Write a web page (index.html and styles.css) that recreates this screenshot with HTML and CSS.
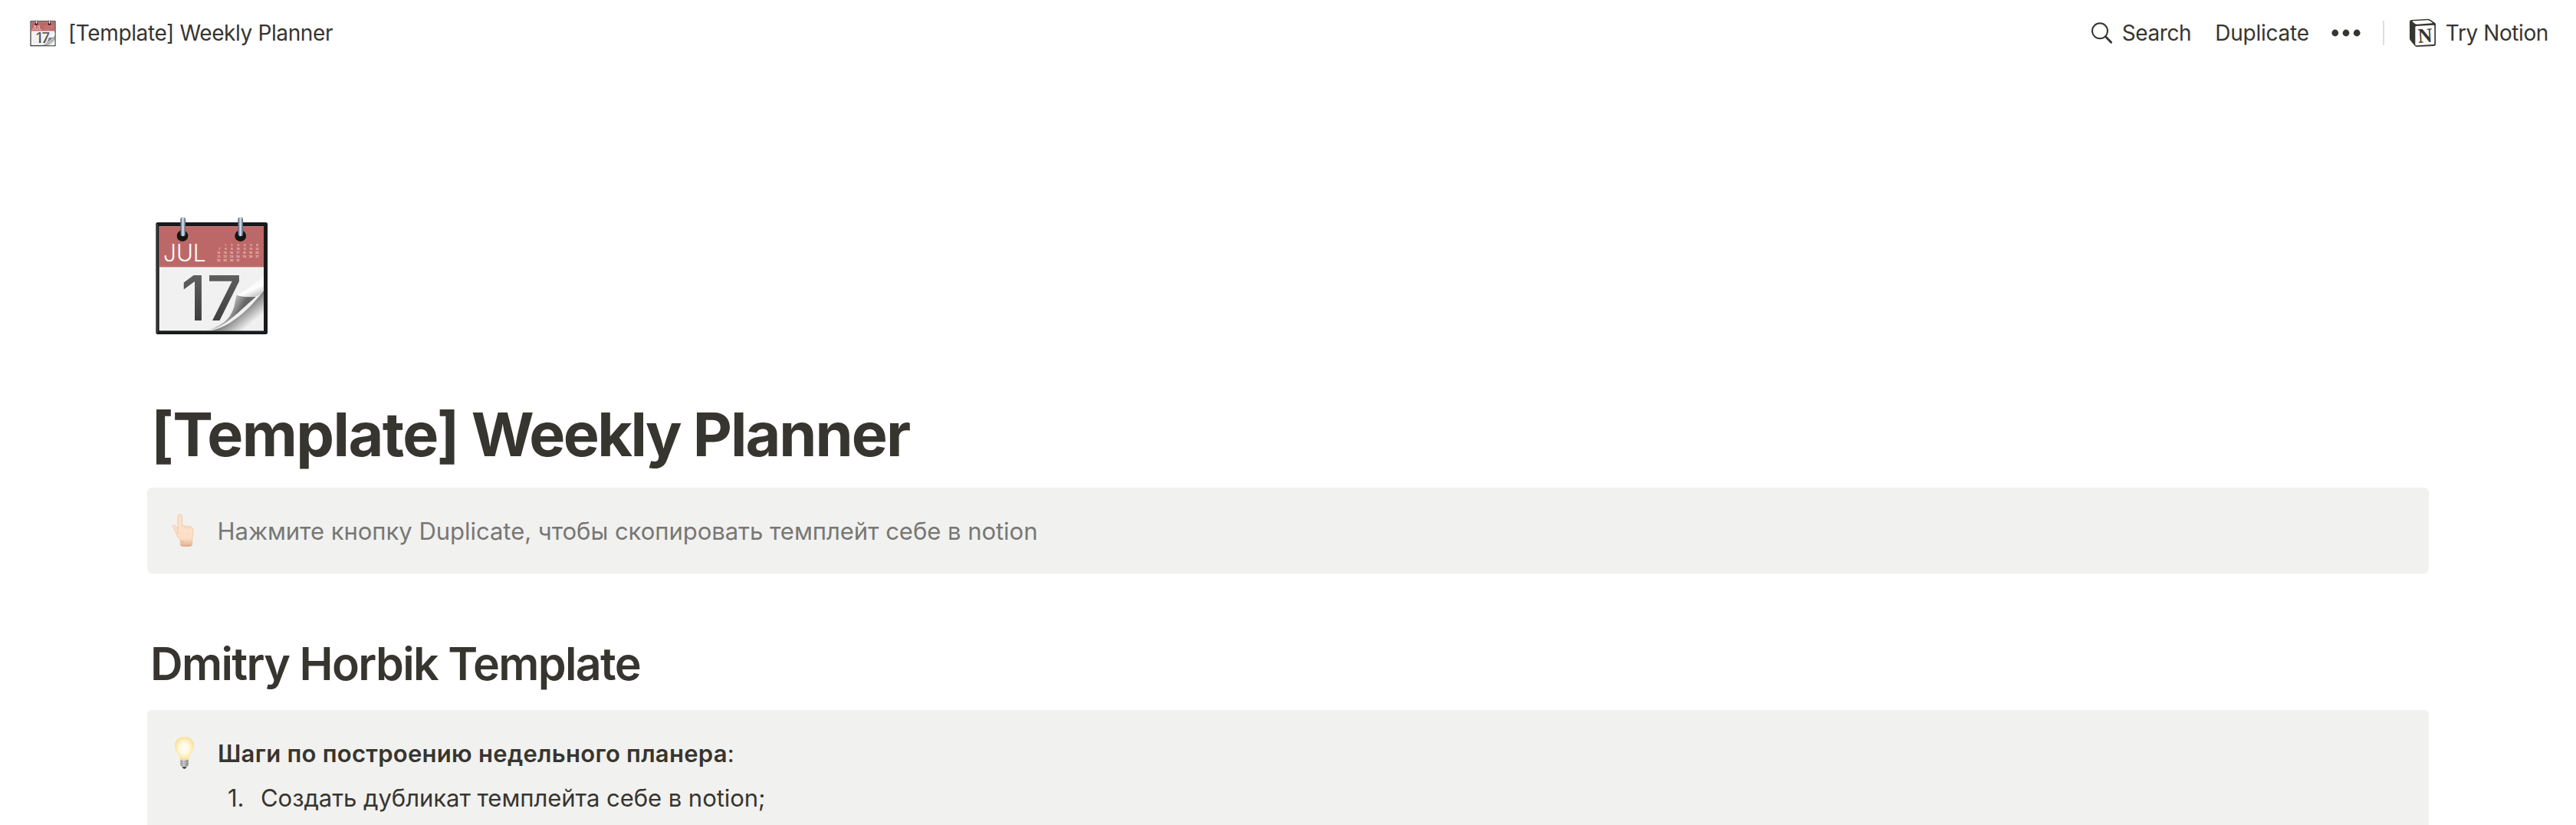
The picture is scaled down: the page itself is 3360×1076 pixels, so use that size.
FILE: index.html
```
<!DOCTYPE html>
<html lang="ru">
<head>
<meta charset="utf-8">
<title>[Template] Weekly Planner</title>
<link rel="stylesheet" href="styles.css">
</head>
<body>
<svg class="defs" width="0" height="0" aria-hidden="true">
  <defs>
    <linearGradient id="ring" x1="0" x2="1" y1="0" y2="0"><stop offset="0" stop-color="#46566f"/><stop offset=".5" stop-color="#dfe8f3"/><stop offset="1" stop-color="#4b5666"/></linearGradient>
    <linearGradient id="ink" x1="0" x2="0" y1="0" y2="1"><stop offset="0" stop-color="#6a6a6a"/><stop offset="1" stop-color="#333"/></linearGradient>
    <linearGradient id="shade" gradientUnits="userSpaceOnUse" x1="385" y1="400" x2="450" y2="480"><stop offset="0" stop-color="#5c5c5c"/><stop offset=".45" stop-color="#8c8c8c"/><stop offset="1" stop-color="#f0f0f0"/></linearGradient>
    <linearGradient id="curl" gradientUnits="userSpaceOnUse" x1="335" y1="410" x2="395" y2="445"><stop offset="0" stop-color="#ededed"/><stop offset=".35" stop-color="#bdbdbd"/><stop offset="1" stop-color="#666"/></linearGradient>
    <linearGradient id="lip" gradientUnits="userSpaceOnUse" x1="420" y1="320" x2="450" y2="382"><stop offset="0" stop-color="#eee"/><stop offset=".6" stop-color="#fff"/><stop offset="1" stop-color="#ccc"/></linearGradient>
    <linearGradient id="skin" x1="0" x2="0" y1="0" y2="1"><stop offset="0" stop-color="#fce2cb"/><stop offset=".75" stop-color="#fcdfc5"/><stop offset="1" stop-color="#e2ae8c"/></linearGradient>
    <radialGradient id="glow" cx=".5" cy=".5" r=".58"><stop offset="0" stop-color="#fffef8"/><stop offset=".45" stop-color="#fff8dd"/><stop offset=".85" stop-color="#f9e29a"/><stop offset="1" stop-color="#eccb70"/></radialGradient>
    <linearGradient id="metal" x1="0" x2="1" y1="0" y2="0"><stop offset="0" stop-color="#999"/><stop offset=".4" stop-color="#ddd"/><stop offset="1" stop-color="#888"/></linearGradient>
    <symbol id="calendar" viewBox="63 66 450 468">
      <rect x="70" y="90" width="437" height="438" rx="7" fill="#191a1b"/>
      <path d="M75 96V522" stroke="#46484a" stroke-width="4"/>
      <rect x="83" y="106" width="409" height="408" fill="#f1f1f1"/>
      <rect x="83" y="106" width="409" height="159" fill="#bd6868"/>
      <path d="M83 107H492" stroke="#d08080" stroke-width="3"/>
      <g class="cal-month"><text x="99" y="243" textLength="167" lengthAdjust="spacingAndGlyphs">JUL</text></g>
      <g class="cal-grid">
        <text y="184" x="343 367 392 418 442 466">123456</text>
        <text y="198" x="319 343">78</text><text y="198" x="367">9</text><text y="198" x="392">10</text><text y="198" x="418">11</text><text y="198" x="442">12</text><text y="198" x="466">13</text>
        <text y="213" x="316">14</text><text y="213" x="341">15</text><text y="213" x="366">16</text><text y="213" x="391">17</text><text y="213" x="416">18</text><text y="213" x="441">19</text><text y="213" x="466">20</text>
        <text y="228" x="316">21</text><text y="228" x="341">22</text><text y="228" x="366">23</text><text y="228" x="391">24</text><text y="228" x="416">25</text><text y="228" x="441">26</text><text y="228" x="466">27</text>
        <text y="242" x="316">28</text><text y="242" x="341">29</text><text y="242" x="366">30</text><text y="242" x="391">31</text>
      </g>
      <g class="cal-day"><text x="168" y="474" textLength="238" lengthAdjust="spacingAndGlyphs" fill="url(#ink)">17</text></g>
      <path d="M492 356C455 405 380 492 285 514H492Z" fill="url(#shade)"/>
      <path d="M250 514C330 500 360 470 376 420C380 400 383 385 386 374C405 382 440 384 462 380C410 425 350 490 290 511Z" fill="url(#curl)"/>
      <path d="M492 285C470 320 430 355 386 374C415 381 445 382 462 379C480 375 488 362 492 346Z" fill="url(#lip)"/>
      <circle cx="174" cy="143" r="22" fill="#151515"/><circle cx="401" cy="143" r="22" fill="#151515"/>
      <rect x="166" y="70" width="20" height="74" rx="9" fill="url(#ring)"/><rect x="391" y="70" width="20" height="74" rx="9" fill="url(#ring)"/>
    </symbol>
  </defs>
</svg>

<header class="topbar">
  <a class="crumb"><svg class="crumb-icon"><use href="#calendar"/></svg><span>[Template] Weekly Planner</span></a>
  <nav class="actions">
    <svg class="search-icon" viewBox="21 39 90 90"><circle cx="57" cy="76" r="30" fill="none" stroke="#37352f" stroke-width="6"/><path d="M80 99L101 121" stroke="#37352f" stroke-width="8.5" stroke-linecap="round"/></svg>
    <span class="search">Search</span>
    <span class="duplicate">Duplicate</span>
    <svg class="more" viewBox="0 0 38 12"><circle cx="4.8" cy="6" r="4.4"/><circle cx="19" cy="6" r="4.4"/><circle cx="33.2" cy="6" r="4.4"/></svg>
    <span class="divider"></span>
    <svg class="notion" viewBox="66 27 108 114">
      <path d="M69 38Q70 34 77 33L140 29Q146 29 150 32L168 44Q171 46 171 50V128Q171 134 165 135L98 138Q92 139 88 133L72 113Q69 109 69 104Z" fill="#37352f"/>
      <path d="M80 40Q78 37 84 37L139 34Q144 34 147 36L157 43Q160 46 156 46L98 50Q93 50 90 48Z" fill="#fff"/>
      <path d="M91 62Q91 58 95 57L161 53Q166 53 166 57V125Q166 129 162 129L96 133Q91 133 91 129Z" fill="#fff"/>
      <g class="notion-letter"><text x="101" y="121" textLength="56" lengthAdjust="spacingAndGlyphs" transform="rotate(-3 128 94)">N</text></g>
    </svg>
    <span class="try">Try Notion</span>
  </nav>
</header>

<main class="page">
  <svg class="page-icon"><use href="#calendar"/></svg>
  <h1 class="title"><span class="title-tag">[Template]</span> <span class="title-name">Weekly</span> Planner</h1>
  <section class="callout callout-hint">
    <svg class="emoji" viewBox="48 54 144 144">
      <path d="M96 70Q97 63 104 63Q111 63 112 70L113 108Q120 104 125 109Q133 106 138 111Q146 109 151 114Q157 118 156 130Q156 146 152 156V182Q150 188 130 188Q108 188 106 183V164Q94 153 90 138Q86 126 79 116Q74 109 76 106Q80 103 88 109Q93 114 96 120Z" fill="url(#skin)" stroke="#e8bd9b" stroke-width="2"/>
      <path d="M96 122V138M125 110V117M139 112V119" fill="none" stroke="#e4b592" stroke-width="2"/>
      <path d="M107 164Q112 170 120 171M108 184Q130 190 151 184" fill="none" stroke="#dca17c" stroke-width="2.5"/>
    </svg>
    <p class="hint">Нажмите кнопку Duplicate, чтобы скопировать темплейт себе в notion</p>
  </section>
  <h2 class="subtitle">Dmitry Horbik Template</h2>
  <section class="callout callout-steps">
    <svg class="emoji" viewBox="48 54 144 144">
      <path d="M106 153C104 133 84 122 84 98C84 77 101 63 121.500 63C142 63 159 77 159 98C159 122 139 133 137 153Z" fill="url(#glow)"/>
      <path d="M106 153H137V174Q135 180 128 181H115Q108 180 106 174Z" fill="url(#metal)"/>
      <path d="M107 160H136M107 167H136M108 174H135" stroke="#8d8d8d" stroke-width="2"/>
      <path d="M112 180H131L126 187Q121.500 190 117 187Z" fill="#484848"/>
    </svg>
    <div class="steps">
      <p class="steps-title"><b>Шаги по построению недельного планера</b>:</p>
      <div class="step"><span class="num">1.</span><span>Создать дубликат темплейта себе в notion;</span></div>
    </div>
  </section>
</main>
</body>
</html>
```
FILE: styles.css
```
* { box-sizing: border-box; }
body {
  margin: 0;
  height: 1076px;
  overflow: hidden;
  background: #fff;
  color: #37352f;
  font-family: Inter, "Liberation Sans", sans-serif;
}
h1, h2, p { margin: 0; }
svg { display: block; flex: none; }
.defs { height: 0; }

.topbar {
  display: flex;
  align-items: center;
  justify-content: space-between;
  height: 86px;
  padding: 0 36px 0 39px;
  font-size: 28px;
  line-height: 40px;
  white-space: nowrap;
}
.crumb { display: flex; align-items: center; gap: 16px; letter-spacing: -0.38px; }
.crumb-icon { width: 34px; height: 36px; }
.actions { display: flex; align-items: center; }
.search-icon { width: 30px; height: 30px; margin-right: 11px; }
.search { margin-right: 31px; letter-spacing: -0.39px; }
.duplicate { margin-right: 29px; letter-spacing: -0.23px; }
.more { width: 38px; height: 12px; margin-right: 29px; fill: #37352f; }
.divider { width: 2px; height: 32px; margin-right: 32px; background: #dededd; }
.notion { width: 36px; height: 38px; margin-right: 12px; }
.notion-letter { font: 700 80px "Liberation Serif", serif; fill: #37352f; }
.try { letter-spacing: -0.41px; }

.page { display: flex; flex-direction: column; padding: 196px 192px 0; }
.page-icon { width: 150px; height: 156px; margin-left: 9px; }
.cal-month { font: 300 92px Inter, sans-serif; fill: #fff; }
.cal-day { font: 500 245px Inter, sans-serif; }
.cal-grid { font: 600 11px Inter, sans-serif; fill: #f0cccc; text-anchor: middle; }

.title {
  margin-top: 80px;
  padding-left: 5px;
  font-size: 79px;
  font-weight: 700;
  line-height: 96px;
  letter-spacing: -1.955px;
}
.title-tag { letter-spacing: -1.55px; }
.title-name { letter-spacing: -2.6px; }
.callout {
  display: flex;
  align-items: flex-start;
  gap: 18px;
  padding: 32px 24px;
  border-radius: 6px;
  background: #f1f1ef;
  font-size: 31px;
  line-height: 48px;
}
.callout-hint { height: 112px; margin-top: 22px; }
.emoji { width: 48px; height: 48px; }
.hint { padding: 1px 0 0 1.5px; color: #787774; letter-spacing: -0.03px; }
.subtitle {
  margin-top: 82px;
  padding-left: 4px;
  font-size: 59px;
  font-weight: 600;
  line-height: 72px;
  letter-spacing: -1.616px;
}
.callout-steps {
  height: 150px;
  margin-top: 24px;
  padding-bottom: 0;
  border-radius: 6px 6px 0 0;
}
.steps { display: flex; flex-direction: column; gap: 10px; padding-top: 1px; }
.steps-title { padding-left: 2px; letter-spacing: 0.275px; }
.steps-title b { font-weight: 600; }
.step { display: flex; padding-left: 15px; letter-spacing: -0.04px; }
.num { width: 43px; }
```
